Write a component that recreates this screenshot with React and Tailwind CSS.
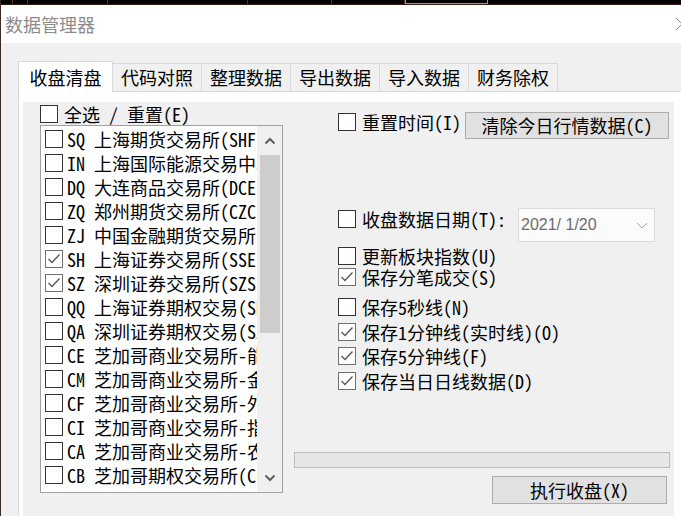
import React from "react";

// 列表里的交易所
const MARKETS = [
	{ code: "SQ", name: "上海期货交易所(SHFE)" },
	{ code: "IN", name: "上海国际能源交易中心" },
	{ code: "DQ", name: "大连商品交易所(DCE)" },
	{ code: "ZQ", name: "郑州期货交易所(CZCE)" },
	{ code: "ZJ", name: "中国金融期货交易所" },
	{ code: "SH", name: "上海证券交易所(SSE)", checked: true },
	{ code: "SZ", name: "深圳证券交易所(SZSE)", checked: true },
	{ code: "QQ", name: "上海证券期权交易(SHOP)" },
	{ code: "QA", name: "深圳证券期权交易(SZOP)" },
	{ code: "CE", name: "芝加哥商业交易所-能源" },
	{ code: "CM", name: "芝加哥商业交易所-金属" },
	{ code: "CF", name: "芝加哥商业交易所-外汇" },
	{ code: "CI", name: "芝加哥商业交易所-指数" },
	{ code: "CA", name: "芝加哥商业交易所-农产品" },
	{ code: "CB", name: "芝加哥期权交易所(CBOE)" },
];

const TABS = ["收盘清盘", "代码对照", "整理数据", "导出数据", "导入数据", "财务除权"];

const CheckBox = ({ checked }) => (
	<div
		className={`w-[18px] h-[18px] shrink-0 bg-white border flex items-center justify-center ${
			checked ? "border-[#707070]" : "border-[#333]"
		}`}>
		{checked && (
			<svg width="16" height="16" viewBox="0 0 16 16">
				<polyline points="2.5,8 6,11.5 13.5,3.5" fill="none" stroke="#5a5a5a" strokeWidth="1.4" />
			</svg>
		)}
	</div>
);

const Option = ({ label, checked, className = "" }) => (
	<div className={`flex items-center gap-[6px] h-[18px] ${className}`}>
		<CheckBox checked={checked} />
		<span className="leading-[18px] whitespace-nowrap">{label}</span>
	</div>
);

const App = () => {
	return (
		<div className="w-[681px] h-[516px] overflow-hidden flex flex-col bg-[#f0f0f0] border-l border-[#3a2a22] text-[18px] text-black font-['Noto_Sans_Mono_CJK_SC','Noto_Sans_CJK_SC',sans-serif]">
			{/* dark strip at the top */}
			<div className="h-[5px] shrink-0 bg-black flex border-b border-[#3a1c12]">
				<div className="w-[12px] border-r border-[#5a2c1c]" />
				<div className="w-[15px] border-r border-[#5a2c1c]" />
				<div className="w-[80px] border-r border-[#5a2c1c]" />
				<div className="w-[140px] border-r border-[#5a2c1c]" />
				<div className="w-[84px] border-r border-[#5a2c1c]" />
				<div className="w-[73px] border-r border-[#5a2c1c]" />
				<div className="w-[83px] border-x border-b border-[#7e9fc6]" />
				<div className="flex-1" />
			</div>

			{/* title bar */}
			<div className="h-[38px] shrink-0 bg-white flex items-center justify-between pl-[4px]">
				<span className="text-[#8c8c8c] text-[18px] font-['Noto_Sans_CJK_SC',sans-serif]">数据管理器</span>
				<svg width="14" height="14" viewBox="0 0 14 14" className="mr-[-8px]">
					<path d="M1 1 L13 13 M13 1 L1 13" stroke="#8a8a8a" strokeWidth="1" />
				</svg>
			</div>

			{/* body */}
			<div className="flex-1 flex flex-col pt-[18px] pl-[17px]">
				{/* tabs */}
				<div className="flex items-end h-[30px] font-['Noto_Sans_CJK_SC',sans-serif] text-[18px]">
					{TABS.map((t, i) =>
						i === 0 ? (
							<div
								key={t}
								className="w-[95px] h-[31px] bg-white border-l border-t border-r border-[#d9d9d9] flex items-center justify-center relative z-10 mb-[-1px]">
								{t}
							</div>
						) : (
							<div
								key={t}
								className="w-[89px] h-[28px] bg-[#f0f0f0] border-t border-r border-[#d9d9d9] flex items-center justify-center">
								{t}
							</div>
						)
					)}
				</div>

				{/* tab page */}
				<div className="flex-1 flex flex-col bg-white border-t border-l border-[#d9d9d9] pt-[10px] pl-[4px] pr-[7px]">
					<div className="flex-1 bg-[#f0f0f0] flex pl-[17px]">
						{/* left: market list */}
						<div className="flex flex-col w-[243px]">
							<Option label="全选 / 重置(E)" className="mt-[3px]" />
							<div className="mt-[2px] h-[368px] border border-[#a0a0a0] bg-white flex">
								<div className="flex-1 overflow-hidden flex flex-col pl-[4px] pt-[1px]">
									{MARKETS.map((m) => (
										<div key={m.code} className="h-[24px] flex items-center gap-[4px] whitespace-nowrap">
											<CheckBox checked={m.checked} />
											<span className="leading-[24px]">
												{m.code} {m.name}
											</span>
										</div>
									))}
								</div>
								{/* scrollbar */}
								<div className="w-[25px] bg-[#f0f0f0] flex flex-col items-center">
									<div className="h-[29px] w-full flex items-center justify-center">
										<svg width="12" height="8" viewBox="0 0 12 8">
											<path d="M1.5 6.5 L6 2 L10.5 6.5" fill="none" stroke="#606060" strokeWidth="2" />
										</svg>
									</div>
									<div className="w-[20px] h-[178px] bg-[#cdcdcd]" />
									<div className="flex-1" />
									<div className="h-[29px] w-full flex items-center justify-center">
										<svg width="12" height="8" viewBox="0 0 12 8">
											<path d="M1.5 1.5 L6 6 L10.5 1.5" fill="none" stroke="#606060" strokeWidth="2" />
										</svg>
									</div>
								</div>
							</div>
						</div>

						{/* right: options */}
						<div className="ml-[11px] w-[376px] flex flex-col">
							<div className="pl-[44px] flex flex-col">
								<div className="mt-[10px] h-[27px] flex items-start">
									<div className="mt-[1px] flex items-center gap-[6px]">
										<CheckBox />
										<span className="leading-[18px] whitespace-nowrap">重置时间(I)</span>
									</div>
									<button
										type="button"
										className="ml-auto mr-[1px] w-[204px] h-[27px] bg-[#e1e1e1] border border-[#adadad] flex items-center justify-center whitespace-nowrap">
										清除今日行情数据(C)
									</button>
								</div>

								<div className="mt-[69px] h-[34px] flex items-start">
									<div className="mt-[2px] flex items-center gap-[6px]">
										<CheckBox />
										<span className="leading-[18px] whitespace-nowrap">收盘数据日期(T):</span>
									</div>
									<div className="ml-auto mr-[15px] w-[137px] h-[34px] bg-[#fbfbfb] border border-[#dcdcdc] flex items-center justify-between pl-[2px] pr-[6px]">
										<span className="text-[16px] text-[#6d6d6d] font-['Liberation_Sans',sans-serif]">2021/ 1/20</span>
										<svg width="12" height="7" viewBox="0 0 12 7">
											<path d="M1 1 L6 6 L11 1" fill="none" stroke="#a8a8a8" strokeWidth="1" />
										</svg>
									</div>
								</div>

								<Option label="更新板块指数(U)" className="mt-[5px]" />
								<Option label="保存分笔成交(S)" checked className="mt-[3px]" />
								<Option label="保存5秒线(N)" className="mt-[12px]" />
								<Option label="保存1分钟线(实时线)(O)" checked className="mt-[7px]" />
								<Option label="保存5分钟线(F)" checked className="mt-[6px]" />
								<Option label="保存当日日线数据(D)" checked className="mt-[7px]" />
							</div>

							{/* progress */}
							<div className="mt-[62px] h-[16px] bg-[#e6e6e6] border border-[#bcbcbc]" />

							<button
								type="button"
								className="mt-[8px] self-end mr-[3px] w-[175px] h-[28px] bg-[#e1e1e1] border border-[#adadad] flex items-center justify-center">
								执行收盘(X)
							</button>
						</div>
					</div>
				</div>
			</div>
		</div>
	);
};

export default App;
